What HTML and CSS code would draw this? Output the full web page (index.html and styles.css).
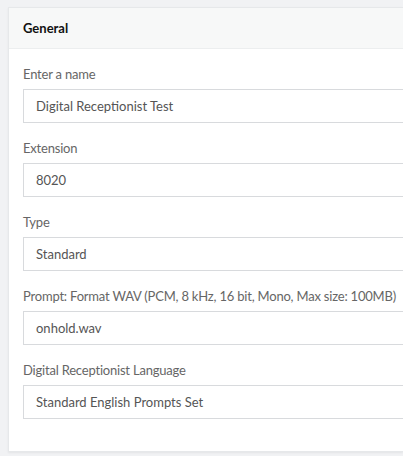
FILE: index.html
```html
<!DOCTYPE html>
<html>
<head>
<meta charset="utf-8">
<link rel="stylesheet" href="styles.css">
</head>
<body>
<div class="card">
  <div class="card-header">General</div>
  <div class="card-body">
    <div class="field">
      <div class="label">Enter a name</div>
      <div class="input">Digital Receptionist Test</div>
    </div>
    <div class="field">
      <div class="label">Extension</div>
      <div class="input">8020</div>
    </div>
    <div class="field">
      <div class="label">Type</div>
      <div class="input">Standard</div>
    </div>
    <div class="field">
      <div class="label">Prompt: Format WAV (PCM, 8 kHz, 16 bit, Mono, Max size: 100MB)</div>
      <div class="input">onhold.wav</div>
    </div>
    <div class="field">
      <div class="label">Digital Receptionist Language</div>
      <div class="input">Standard English Prompts Set</div>
    </div>
  </div>
</div>
</body>
</html>
```

FILE: styles.css
```css
html, body {
  margin: 0;
  padding: 0;
}
body {
  background: #f1f2f4;
  font-family: "Lato", "Noto Sans", sans-serif;
  font-size: 13px;
  color: #555;
  padding: 7px 0 0 8px;
  overflow: hidden;
  height: 456px;
  box-sizing: border-box;
}
.card {
  background: #fff;
  border: 1px solid #e6e8ea;
  border-right: none;
  box-shadow: 0 1px 2px rgba(0,0,0,0.06);
}
.card-header {
  background: #f7f8f8;
  border-bottom: 1px solid #eceeef;
  height: 40px;
  line-height: 40px;
  padding-left: 14px;
  font-weight: 700;
  color: #111;
  font-size: 13px;
}
.card-body {
  padding: 16px 0 32px 14px;
  display: flex;
  flex-direction: column;
  gap: 16px;
}
.field {
  display: flex;
  flex-direction: column;
  gap: 6px;
}
.label {
  color: #666;
  line-height: 18px;
  white-space: nowrap;
  letter-spacing: -0.2px;
}
.input {
  height: 32px;
  line-height: 32px;
  border: 1px solid #d8dadd;
  border-right: none;
  padding-left: 12px;
  color: #555;
}
```
